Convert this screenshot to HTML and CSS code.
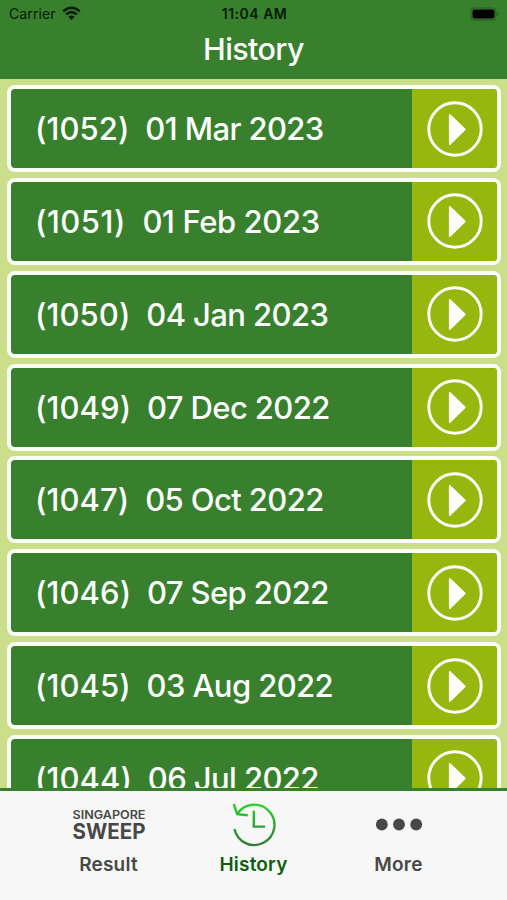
FILE: index.html
```html
<!DOCTYPE html>
<html lang="en">
<head>
<meta charset="utf-8">
<title>History</title>
<link rel="stylesheet" href="styles.css">
</head>
<body>
<svg width="0" height="0" class="defs">
  <symbol id="play" viewBox="0 0 56 56">
    <circle cx="28" cy="28" r="26.2" fill="none" stroke="#fff" stroke-width="2.9"/>
    <path d="M22.8 14 L37.8 28.4 L22.8 43Z" fill="#fff" stroke="#fff" stroke-width="1.8" stroke-linejoin="round"/>
  </symbol>
</svg>
<div class="app">
  <header class="header">
    <div class="status">
      <div class="carrier"><span>Carrier</span>
        <svg class="wifi" viewBox="0 0 19 15"><path d="M1.2 5.4 Q9.5 -1.8 17.8 5.4 M4.1 8.4 Q9.5 3.9 14.9 8.4" fill="none" stroke="#061c05" stroke-width="2.5"/><path d="M6.2 10.6 Q9.5 8.2 12.8 10.6 L9.5 14Z" fill="#061c05"/></svg>
      </div>
      <div class="clock">11:04 AM</div>
      <svg class="battery" viewBox="0 0 30 14"><rect x="1" y="1" width="25" height="12" rx="3.5" fill="none" stroke="#245a1f"/><rect x="2.5" y="2.5" width="22" height="9" rx="2" fill="#000"/><path d="M27.5 5 Q30 7 27.5 9Z" fill="#245a1f"/></svg>
    </div>
    <h1 class="title">History</h1>
  </header>
  <main class="list">
    <div class="row"><span class="label"><span class="num">(1052)  </span><span class="date">01 Mar 2023</span></span><span class="go"><svg class="play"><use href="#play"/></svg></span></div>
    <div class="row"><span class="label"><span class="num wide">(1051)  </span><span class="date wide-date">01 Feb 2023</span></span><span class="go"><svg class="play"><use href="#play"/></svg></span></div>
    <div class="row"><span class="label"><span class="num">(1050)  </span><span class="date">04 Jan 2023</span></span><span class="go"><svg class="play"><use href="#play"/></svg></span></div>
    <div class="row"><span class="label"><span class="num">(1049)  </span><span class="date">07 Dec 2022</span></span><span class="go"><svg class="play"><use href="#play"/></svg></span></div>
    <div class="row"><span class="label"><span class="num">(1047)  </span><span class="date">05 Oct 2022</span></span><span class="go"><svg class="play"><use href="#play"/></svg></span></div>
    <div class="row"><span class="label"><span class="num">(1046)  </span><span class="date">07 Sep 2022</span></span><span class="go"><svg class="play"><use href="#play"/></svg></span></div>
    <div class="row"><span class="label"><span class="num">(1045)  </span><span class="date">03 Aug 2022</span></span><span class="go"><svg class="play"><use href="#play"/></svg></span></div>
    <div class="row"><span class="label"><span class="num">(1044)  </span><span class="date">06 Jul 2022</span></span><span class="go"><svg class="play"><use href="#play"/></svg></span></div>
  </main>
  <nav class="tabs">
    <div class="tab">
      <svg class="icon" viewBox="0 0 76 46"><g class="sweep"><text x="1.5" y="18" font-size="12" font-weight="600" textLength="73" lengthAdjust="spacingAndGlyphs">SINGAPORE</text><text x="1.5" y="37.7" font-size="21" font-weight="700" textLength="73" lengthAdjust="spacingAndGlyphs">SWEEP</text></g></svg>
      <span>Result</span>
    </div>
    <div class="tab active">
      <svg class="icon" viewBox="0 0 76 46">
        <defs><linearGradient id="g" gradientUnits="userSpaceOnUse" x1="0" y1="2" x2="0" y2="44"><stop offset="0" stop-color="#27d72c"/><stop offset="1" stop-color="#327b32"/></linearGradient></defs>
        <path d="M18.5 28 A20.2 20.2 0 1 0 21.2 13 M17.8 3 L21.2 13.2 L31.8 14.2 M37.8 9.7 V25.6 H49" fill="none" stroke="url(#g)" stroke-width="2.4"/>
      </svg>
      <span>History</span>
    </div>
    <div class="tab">
      <svg class="icon" viewBox="0 0 76 46"><g fill="#484848"><circle cx="20.8" cy="23.5" r="5.9"/><circle cx="38" cy="23.5" r="5.9"/><circle cx="55.2" cy="23.5" r="5.9"/></g></svg>
      <span>More</span>
    </div>
  </nav>
</div>
</body>
</html>
```
FILE: styles.css
```css
* { box-sizing: border-box; }
body { margin: 0; font-family: Inter, "Liberation Sans", sans-serif; }
.defs { position: absolute; }
.app { width: 507px; height: 900px; display: flex; flex-direction: column; overflow: hidden; background: #cbdf8b; }
.header { flex: none; height: 79px; background: #38802e; }
.status { height: 27px; padding: 0 7px 0 9px; display: grid; grid-template-columns: 1fr auto 1fr; align-items: center; font-size: 14px; color: #061c05; }
.carrier { display: flex; align-items: center; gap: 6px; letter-spacing: 0.1px; }
.wifi { width: 19px; height: 15px; margin-top: -1px; }
.clock { font-weight: 600; letter-spacing: 0.5px; }
.battery { width: 30px; height: 14px; justify-self: end; }
.title { margin: 0; text-align: center; color: #fff; font-size: 30.5px; font-weight: 500; line-height: 44px; letter-spacing: -0.6px; }
.list { flex: 1; min-height: 0; overflow: hidden; padding: 6px 6px 0 7px; display: flex; flex-direction: column; gap: 5.85px; }
.row { flex: none; height: 87px; border: 4px solid #fbfdf7; border-radius: 8px; background: #38802e; display: flex; overflow: hidden; }
.label { flex: 1; padding-left: 24px; display: flex; align-items: center; white-space: pre; color: #fff; font-size: 31px; font-weight: 500; }
.num { letter-spacing: 0.1px; margin-right: -1px; }
.date { letter-spacing: -0.6px; }
.wide { letter-spacing: 0.5px; }
.wide-date { letter-spacing: -0.4px; }
.go { width: 85px; background: #96b70d; display: flex; align-items: center; justify-content: center; }
.play { width: 56px; height: 56px; }
.tabs { flex: none; height: 112px; border-top: 3px solid #38802e; background: #f7f7f7; padding: 10px 36px 0; display: grid; grid-template-columns: repeat(3, 1fr); }
.tab { display: flex; flex-direction: column; align-items: center; font-size: 19px; font-weight: 600; line-height: 24px; color: #484848; }
.tab span { margin-top: 6px; letter-spacing: 0.2px; }
.active { color: #105c10; }
.icon { width: 76px; height: 46px; }
.sweep { fill: #484848; font-family: Inter, sans-serif; }
```
